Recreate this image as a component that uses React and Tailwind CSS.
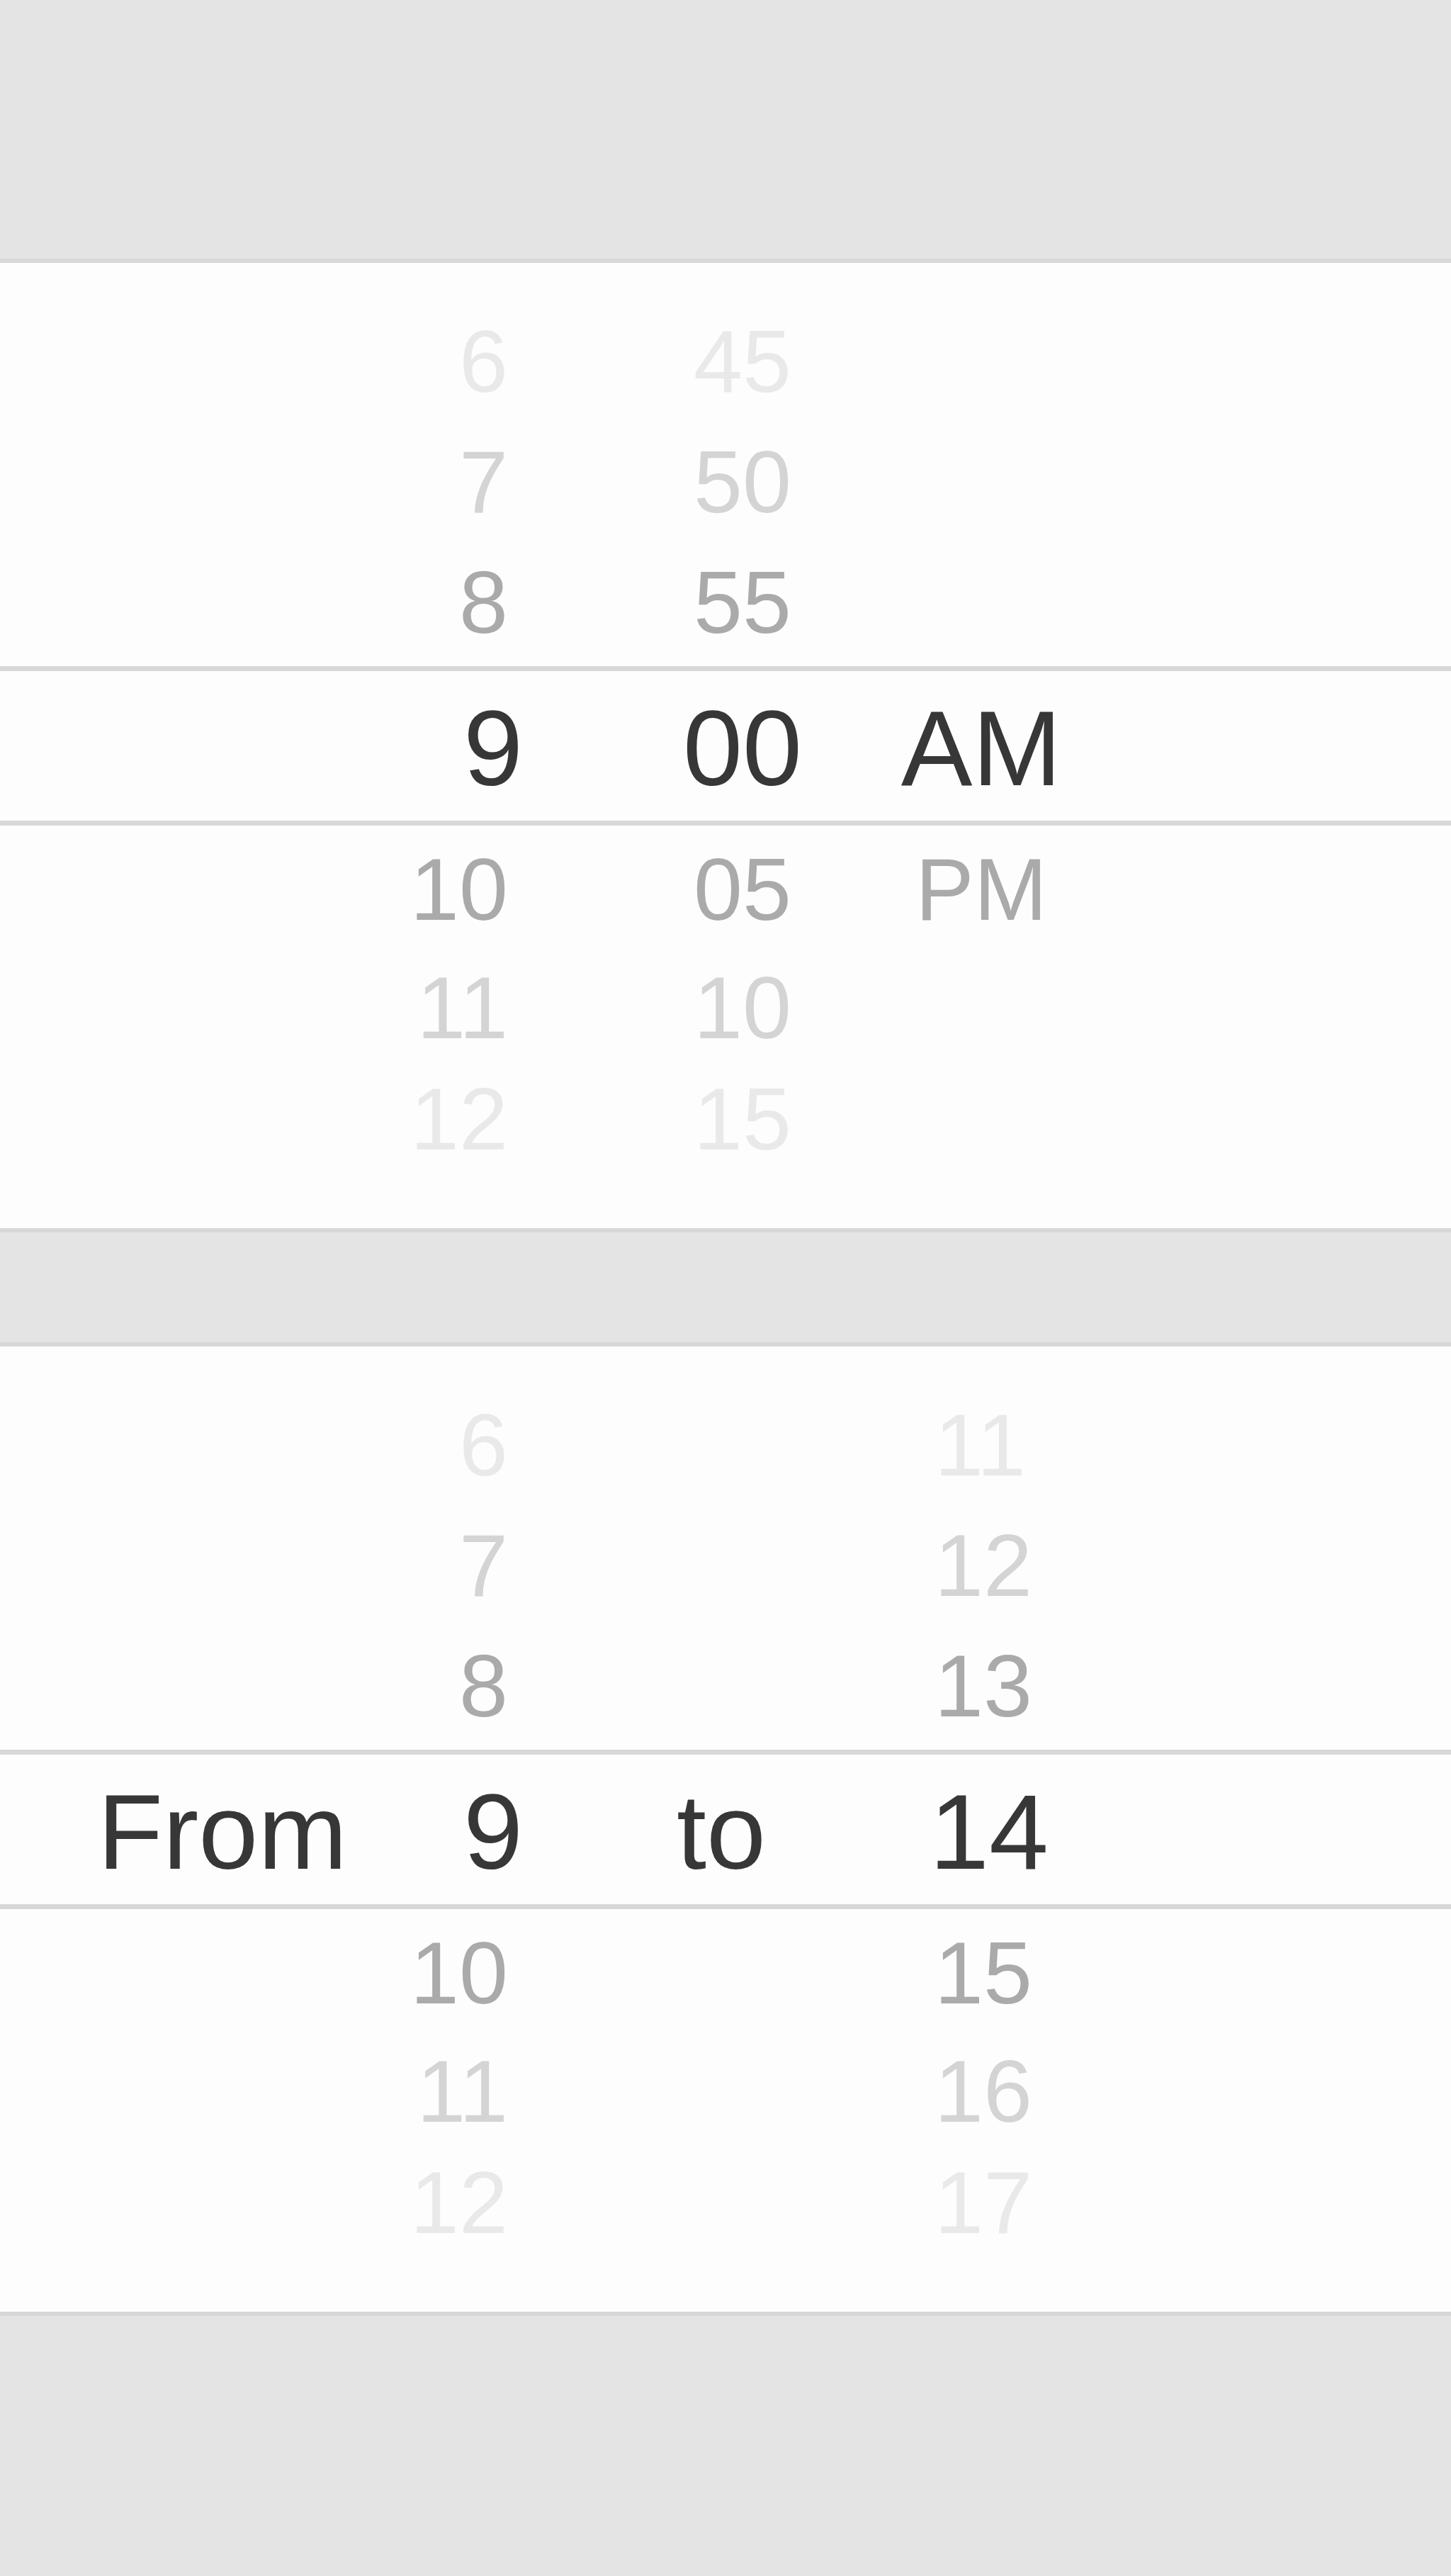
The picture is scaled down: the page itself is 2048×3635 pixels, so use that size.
import React from 'react';

// tone of each wheel row by its distance from the selection band
const TONE = {
    1: 'text-[#aaaaaa]',
    2: 'text-[#d4d4d4]',
    3: 'text-[#e9e9e9]',
};

// rows above the band share one height, rows below get squeezed a little
const ABOVE_HEIGHTS = ['h-[170px]', 'h-[170px]', 'h-[170px]'];
const BELOW_HEIGHTS = ['h-[180px]', 'h-[154px]', 'h-[160px]'];

const FONT = "font-['Liberation_Sans',Arial,sans-serif]";

const timeRowsAbove = [
    { hour: '6', minute: '45', tone: 3 },
    { hour: '7', minute: '50', tone: 2 },
    { hour: '8', minute: '55', tone: 1 },
];

const timeRowsBelow = [
    { hour: '10', minute: '05', period: 'PM', tone: 1 },
    { hour: '11', minute: '10', tone: 2 },
    { hour: '12', minute: '15', tone: 3 },
];

const rangeRowsAbove = [
    { from: '6', to: '11', tone: 3 },
    { from: '7', to: '12', tone: 2 },
    { from: '8', to: '13', tone: 1 },
];

const rangeRowsBelow = [
    { from: '10', to: '15', tone: 1 },
    { from: '11', to: '16', tone: 2 },
    { from: '12', to: '17', tone: 3 },
];

const TimeRow = ({ row, height }) => (
    <div className={`${height} grid grid-cols-[828px_440px_234px_1fr] items-center text-[124px] leading-none ${TONE[row.tone]}`}>
        <span className="text-right pr-[111px]">{row.hour}</span>
        <span className="text-center">{row.minute}</span>
        <span className="text-center">{row.period || ''}</span>
        <span />
    </div>
);

const RangeRow = ({ row, height }) => (
    <div className={`${height} grid grid-cols-[560px_268px_380px_1fr] items-center text-[124px] leading-none ${TONE[row.tone]}`}>
        <span />
        <span className="text-right pr-[111px]">{row.from}</span>
        <span />
        <span className="text-left pl-[111px]">{row.to}</span>
    </div>
);

const Band = ({ children }) => (
    <div className="mt-[5px] h-[225px] border-y-[7px] border-[#d8d8d8] pt-[5px] flex items-center">
        {children}
    </div>
);

const Wheel = ({ children }) => (
    <section className="h-[1374px] border-y-[6px] border-[#d7d7d7] bg-[#fdfdfd] pt-[54px] flex flex-col">
        {children}
    </section>
);

const App = () => {
    return (
        <div className={`w-[2048px] min-h-[3635px] bg-[#e4e4e4] ${FONT}`}>
            <div className="h-[365px]" />

            <Wheel>
                {timeRowsAbove.map((row, i) => (
                    <TimeRow key={row.hour} row={row} height={ABOVE_HEIGHTS[i]} />
                ))}
                <Band>
                    <div className="w-full grid grid-cols-[828px_440px_234px_1fr] items-center text-[151px] leading-none text-[#373737]">
                        <span className="text-right pr-[90px]">9</span>
                        <span className="text-center">00</span>
                        <span className="text-center">AM</span>
                        <span />
                    </div>
                </Band>
                {timeRowsBelow.map((row, i) => (
                    <TimeRow key={row.hour} row={row} height={BELOW_HEIGHTS[i]} />
                ))}
            </Wheel>

            <div className="h-[155px]" />

            <Wheel>
                {rangeRowsAbove.map((row, i) => (
                    <RangeRow key={row.from} row={row} height={ABOVE_HEIGHTS[i]} />
                ))}
                <Band>
                    <div className="w-full grid grid-cols-[560px_268px_380px_1fr] items-center text-[151px] leading-none text-[#373737]">
                        <span className="text-right pr-[70px]">From</span>
                        <span className="text-right pr-[90px]">9</span>
                        <span className="text-center">to</span>
                        <span className="text-left pl-[104px]">14</span>
                    </div>
                </Band>
                {rangeRowsBelow.map((row, i) => (
                    <RangeRow key={row.from} row={row} height={BELOW_HEIGHTS[i]} />
                ))}
            </Wheel>

            <div className="h-[367px]" />
        </div>
    );
};

export default App;
